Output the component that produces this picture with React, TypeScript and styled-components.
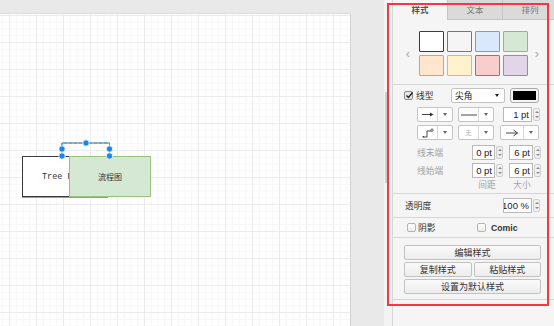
import styled, { createGlobalStyle } from "styled-components";

const GlobalStyle = createGlobalStyle`
  html, body {
    margin: 0;
    padding: 0;
    overflow: hidden;
  }
  body {
    font-family: "Liberation Sans", "Noto Sans CJK SC", sans-serif;
  }
  * {
    box-sizing: border-box;
  }
`;

const Root = styled.div`
  position: relative;
  display: flex;
  width: 554px;
  height: 326px;
  overflow: hidden;
`;

const CanvasArea = styled.div`
  width: 384px;
  flex-shrink: 0;
  padding-top: 13px;
  background: #e9e9e9;
`;

const Page = styled.div`
  position: relative;
  width: 351px;
  height: 313px;
  background-color: #fff;
  background-image: linear-gradient(to right, #ececec 1px, transparent 1px),
    linear-gradient(to bottom, #ececec 1px, transparent 1px),
    linear-gradient(to right, #f6f6f6 1px, transparent 1px),
    linear-gradient(to bottom, #f6f6f6 1px, transparent 1px);
  background-size: 27px 27px, 27px 27px, 6.75px 6.75px, 6.75px 6.75px;
  background-position: 9px 1px, 9px 1px, 9px 1px, 9px 1px;
  border-top: 1px solid #dcdcdc;
  border-right: 1px solid #d2d2d2;
`;

const TreeShape = styled.div`
  position: absolute;
  left: 22px;
  top: 142px;
  width: 86px;
  height: 41px;
  border: 1px solid #3a3a3a;
  box-shadow: 0 1px 0 #9a9a9a;
  background: #fff;
  display: flex;
  align-items: center;
  padding-left: 19px;
  font-family: "Liberation Mono", monospace;
  font-size: 8.5px;
  color: #333;
  white-space: nowrap;
`;

const FlowShape = styled.div`
  position: absolute;
  left: 69px;
  top: 142px;
  width: 82px;
  height: 41px;
  border: 1px solid #96c47c;
  background: #d5e8d4;
  display: flex;
  align-items: center;
  justify-content: center;
  font-family: "Noto Sans CJK SC", sans-serif;
  font-size: 8px;
  color: #333;
`;

const EdgeLayer = styled.svg`
  position: absolute;
  left: 0;
  top: 0;
  width: 350px;
  height: 312px;
  pointer-events: none;
`;

const ScrollTrack = styled.div`
  width: 8px;
  flex-shrink: 0;
  background: #f3f3f3;
  padding-top: 92px;
  padding-left: 1px;
`;

const ScrollThumb = styled.div`
  width: 3px;
  height: 91px;
  background: #cdcdcd;
`;

const Panel = styled.div`
  width: 162px;
  flex-shrink: 0;
  background: #f5f5f5;
  border-left: 1px solid #d8d8d8;
  overflow: hidden;
  font-family: "Noto Sans CJK SC", sans-serif;
  color: #333;
`;

const Tabs = styled.div`
  display: flex;
  height: 20px;
  width: 170px;
`;

const Tab = styled.div<{ $active?: boolean; $w: number }>`
  width: ${(p) => p.$w}px;
  flex-shrink: 0;
  height: 20px;
  line-height: 19px;
  text-align: center;
  font-size: 8.5px;
  font-weight: ${(p) => (p.$active ? 700 : 400)};
  color: ${(p) => (p.$active ? "#555" : "#777")};
  background: ${(p) => (p.$active ? "#f5f5f5" : "#dadada")};
  border-left: ${(p) => (p.$active ? "none" : "1px solid #c6c6c6")};
  border-bottom: ${(p) => (p.$active ? "none" : "1px solid #c6c6c6")};
`;

const Section = styled.div<{ $pt: number; $pb: number }>`
  padding-top: ${(p) => p.$pt}px;
  padding-bottom: ${(p) => p.$pb}px;
  border-bottom: 1px solid #d6d6d6;
`;

const SwatchRow = styled.div`
  display: flex;
  align-items: center;
  padding-left: 11px;
`;

const Pager = styled.span<{ $gap: number }>`
  width: 8px;
  margin-right: ${(p) => p.$gap}px;
  font-family: "Liberation Sans", sans-serif;
  font-size: 13px;
  color: #a8a8a8;
  text-align: center;
`;

const SwatchGrid = styled.div`
  display: grid;
  grid-template-columns: repeat(4, 25px);
  grid-auto-rows: 21px;
  column-gap: 3px;
  row-gap: 3px;
  margin-right: 5px;
`;

const Swatch = styled.div<{ $fill: string; $stroke: string; $strong?: boolean }>`
  background: ${(p) => p.$fill};
  border: ${(p) => (p.$strong ? "1.5px" : "1px")} solid ${(p) => p.$stroke};
  border-radius: 1px;
`;

const Row = styled.div<{ $indent: number; $mb?: number; $h?: number }>`
  display: flex;
  align-items: center;
  height: ${(p) => p.$h ?? 15}px;
  padding-left: ${(p) => p.$indent}px;
  margin-bottom: ${(p) => p.$mb ?? 0}px;
`;

const CheckBox = styled.span<{ $checked?: boolean }>`
  position: relative;
  width: 9px;
  height: 9px;
  flex-shrink: 0;
  border: 1px solid ${(p) => (p.$checked ? "#8a8a8a" : "#b4b4b4")};
  border-radius: 2px;
  background: ${(p) => (p.$checked ? "#e8e8e8" : "linear-gradient(#fff, #ececec)")};
`;

const Label = styled.span<{ $w?: number; $ml?: number; $muted?: boolean; $bold?: boolean; $latin?: boolean }>`
  width: ${(p) => (p.$w ? `${p.$w}px` : "auto")};
  margin-left: ${(p) => p.$ml ?? 0}px;
  flex-shrink: 0;
  font-size: 8.7px;
  font-weight: ${(p) => (p.$bold ? 700 : 400)};
  font-family: ${(p) =>
    p.$latin ? `"Liberation Sans", sans-serif` : `"Noto Sans CJK SC", sans-serif`};
  color: ${(p) => (p.$muted ? "#a3a3a3" : "#333")};
  white-space: nowrap;
`;

const SelectBox = styled.div<{ $w: number; $ml?: number }>`
  display: flex;
  width: ${(p) => p.$w}px;
  height: 15px;
  margin-left: ${(p) => p.$ml ?? 0}px;
  flex-shrink: 0;
  border: 1px solid #c4c4c4;
  border-radius: 2px;
  background: #fff;
`;

const SelectFace = styled.div<{ $left?: boolean }>`
  flex: 1;
  display: flex;
  align-items: center;
  justify-content: ${(p) => (p.$left ? "flex-start" : "center")};
  padding-left: ${(p) => (p.$left ? 3 : 0)}px;
  font-size: 8.7px;
  color: #222;
`;

const SelectDrop = styled.div<{ $divided?: boolean }>`
  width: 15px;
  display: flex;
  align-items: center;
  justify-content: center;
  border-left: ${(p) => (p.$divided ? "1px solid #d8d8d8" : "none")};
`;

const Caret = styled.span<{ $dark?: boolean }>`
  width: 0;
  height: 0;
  border-left: 2.5px solid transparent;
  border-right: 2.5px solid transparent;
  border-top: 3.5px solid ${(p) => (p.$dark ? "#222" : "#666")};
`;

const ColorButton = styled.div`
  width: 29px;
  height: 15px;
  margin-left: 5px;
  padding: 2px;
  border: 1px solid #a9a9a9;
  border-radius: 3px;
  background: #f4f4f4;
`;

const ColorFill = styled.div`
  width: 100%;
  height: 100%;
  background: #000;
`;

const NumberBox = styled.div<{ $w: number; $ml?: number }>`
  width: ${(p) => p.$w}px;
  height: 15px;
  margin-left: ${(p) => p.$ml ?? 0}px;
  flex-shrink: 0;
  border: 1px solid #b9b9b9;
  background: #fff;
  display: flex;
  align-items: center;
  justify-content: flex-end;
  padding-right: 2px;
  font-family: "Liberation Sans", sans-serif;
  font-size: 9.5px;
  color: #222;
  white-space: nowrap;
  overflow: hidden;
`;

const Spinner = styled.div`
  width: 7px;
  height: 13px;
  margin-left: 1px;
  flex-shrink: 0;
  display: flex;
  flex-direction: column;
  align-items: center;
  justify-content: space-around;
  border: 1px solid #cfcfcf;
  border-radius: 2px;
  background: #f0f0f0;
`;

const SpinUp = styled.span`
  width: 0;
  height: 0;
  border-left: 2px solid transparent;
  border-right: 2px solid transparent;
  border-bottom: 2.5px solid #8a8a8a;
`;

const SpinDown = styled.span`
  width: 0;
  height: 0;
  border-left: 2px solid transparent;
  border-right: 2px solid transparent;
  border-top: 2.5px solid #8a8a8a;
`;

const Caption = styled.span<{ $w: number; $ml: number }>`
  width: ${(p) => p.$w}px;
  margin-left: ${(p) => p.$ml}px;
  text-align: center;
  font-size: 8.7px;
  color: #a3a3a3;
`;

const NoneText = styled.span`
  font-size: 6px;
  color: #b0b0b0;
`;

const ButtonStack = styled.div`
  display: grid;
  grid-template-columns: 1fr 1fr;
  gap: 2px;
  padding: 0 13px 0 11px;
`;

const ActionButton = styled.div<{ $span?: boolean }>`
  grid-column: ${(p) => (p.$span ? "1 / span 2" : "auto")};
  height: 15px;
  display: flex;
  align-items: center;
  justify-content: center;
  border: 1px solid #c2c2c2;
  border-radius: 2px;
  background: linear-gradient(#f9f9f9, #ededed);
  font-size: 9px;
  color: #333;
`;

const Annotation = styled.div`
  position: absolute;
  left: 387px;
  top: 3px;
  width: 162px;
  height: 303px;
  border: 2px solid #ee3a40;
  pointer-events: none;
`;

const swatches = [
  { fill: "#ffffff", stroke: "#3c3c3c", strong: true },
  { fill: "#f5f5f5", stroke: "#777777" },
  { fill: "#dae8fc", stroke: "#7d9cc9" },
  { fill: "#d5e8d4", stroke: "#8fbb72" },
  { fill: "#ffe6cc", stroke: "#e0a53c" },
  { fill: "#fff2cc", stroke: "#d8bc62" },
  { fill: "#f8cecc", stroke: "#c06460" },
  { fill: "#e1d5e7", stroke: "#a085b0" },
];

function Spin() {
  return (
    <Spinner>
      <SpinUp />
      <SpinDown />
    </Spinner>
  );
}

function Check() {
  return (
    <svg width="9" height="9" viewBox="0 0 9 9" style={{ position: "absolute", left: 0, top: -1 }}>
      <path d="M1.5 4.5 L3.5 6.5 L7.5 1.5" fill="none" stroke="#222" strokeWidth="1.4" />
    </svg>
  );
}

export default function App() {
  const handles: [number, number][] = [
    [62, 135],
    [86, 129],
    [109.5, 135],
    [62, 142],
    [109.5, 142],
  ];

  return (
    <Root>
      <GlobalStyle />
      <CanvasArea>
        <Page>
          <TreeShape>Tree Root</TreeShape>
          <FlowShape>流程图</FlowShape>
          <EdgeLayer viewBox="0 0 350 312">
            <path d="M62 142 V129 H109.5 V142" fill="none" stroke="#666" strokeWidth="1" />
            <path
              d="M62 142 V129 H109.5 V142"
              fill="none"
              stroke="#29a3f2"
              strokeWidth="1"
              strokeDasharray="3 2"
            />
            {handles.map(([x, y], i) => (
              <circle key={i} cx={x} cy={y} r="3.2" fill="#1a86f0" stroke="#fff" strokeWidth="0.8" />
            ))}
          </EdgeLayer>
        </Page>
      </CanvasArea>
      <ScrollTrack>
        <ScrollThumb />
      </ScrollTrack>
      <Panel>
        <Tabs>
          <Tab $active $w={54}>样式</Tab>
          <Tab $w={55}>文本</Tab>
          <Tab $w={55}>排列</Tab>
        </Tabs>

        <Section $pt={11} $pb={8}>
          <SwatchRow>
            <Pager $gap={7}>‹</Pager>
            <SwatchGrid>
              {swatches.map((s, i) => (
                <Swatch key={i} $fill={s.fill} $stroke={s.stroke} $strong={s.strong} />
              ))}
            </SwatchGrid>
            <Pager $gap={0}>›</Pager>
          </SwatchRow>
        </Section>

        <Section $pt={3} $pb={3}>
          <Row $indent={11} $mb={4}>
            <CheckBox $checked>
              <Check />
            </CheckBox>
            <Label $w={35} $ml={3}>线型</Label>
            <SelectBox $w={54}>
              <SelectFace $left>尖角</SelectFace>
              <SelectDrop>
                <Caret $dark />
              </SelectDrop>
            </SelectBox>
            <ColorButton>
              <ColorFill />
            </ColorButton>
          </Row>

          <Row $indent={24} $mb={3}>
            <SelectBox $w={36}>
              <SelectFace>
                <svg width="14" height="7" viewBox="0 0 14 7">
                  <path d="M1 3.5 H10" stroke="#333" strokeWidth="0.9" />
                  <path d="M9 1.5 L12.5 3.5 L9 5.5 Z" fill="#333" />
                </svg>
              </SelectFace>
              <SelectDrop $divided>
                <Caret />
              </SelectDrop>
            </SelectBox>
            <SelectBox $w={36} $ml={5}>
              <SelectFace>
                <svg width="16" height="4" viewBox="0 0 16 4">
                  <path d="M0 2 H16" stroke="#333" strokeWidth="0.9" />
                </svg>
              </SelectFace>
              <SelectDrop $divided>
                <Caret />
              </SelectDrop>
            </SelectBox>
            <NumberBox $w={29} $ml={9}>1 pt</NumberBox>
            <Spin />
          </Row>

          <Row $indent={24} $mb={5}>
            <SelectBox $w={36}>
              <SelectFace>
                <svg width="12" height="10" viewBox="0 0 12 10">
                  <path d="M1 9 H5 V3 H9" fill="none" stroke="#333" strokeWidth="0.9" />
                  <circle cx="10" cy="2.2" r="1.2" fill="none" stroke="#333" strokeWidth="0.8" />
                  <circle cx="1.2" cy="8.8" r="0.8" fill="#333" />
                </svg>
              </SelectFace>
              <SelectDrop $divided>
                <Caret />
              </SelectDrop>
            </SelectBox>
            <SelectBox $w={36} $ml={5}>
              <SelectFace>
                <NoneText>无</NoneText>
              </SelectFace>
              <SelectDrop $divided>
                <Caret />
              </SelectDrop>
            </SelectBox>
            <SelectBox $w={39} $ml={6}>
              <SelectFace>
                <svg width="14" height="8" viewBox="0 0 14 8">
                  <path d="M1 4 H12.5" stroke="#333" strokeWidth="0.9" />
                  <path d="M8.5 1 L12.5 4 L8.5 7" fill="none" stroke="#333" strokeWidth="0.9" />
                </svg>
              </SelectFace>
              <SelectDrop $divided>
                <Caret />
              </SelectDrop>
            </SelectBox>
          </Row>

          <Row $indent={24} $mb={3}>
            <Label $w={55} $muted>线末端</Label>
            <NumberBox $w={23}>0 pt</NumberBox>
            <Spin />
            <NumberBox $w={24} $ml={6}>6 pt</NumberBox>
            <Spin />
          </Row>

          <Row $indent={24}>
            <Label $w={55} $muted>线始端</Label>
            <NumberBox $w={23}>0 pt</NumberBox>
            <Spin />
            <NumberBox $w={24} $ml={6}>6 pt</NumberBox>
            <Spin />
          </Row>

          <Row $indent={79} $h={12}>
            <Caption $w={30} $ml={0}>间距</Caption>
            <Caption $w={30} $ml={5}>大小</Caption>
          </Row>
        </Section>

        <Section $pt={4} $pb={4}>
          <Row $indent={12}>
            <Label $w={98}>透明度</Label>
            <NumberBox $w={29}>100 %</NumberBox>
            <Spin />
          </Row>
        </Section>

        <Section $pt={2} $pb={2}>
          <Row $indent={14}>
            <CheckBox />
            <Label $w={59} $ml={2}>阴影</Label>
            <CheckBox />
            <Label $ml={5} $bold $latin>
              Comic
            </Label>
          </Row>
        </Section>

        <Section $pt={7} $pb={5}>
          <ButtonStack>
            <ActionButton $span>编辑样式</ActionButton>
            <ActionButton>复制样式</ActionButton>
            <ActionButton>粘贴样式</ActionButton>
            <ActionButton $span>设置为默认样式</ActionButton>
          </ButtonStack>
        </Section>
      </Panel>
      <Annotation />
    </Root>
  );
}
